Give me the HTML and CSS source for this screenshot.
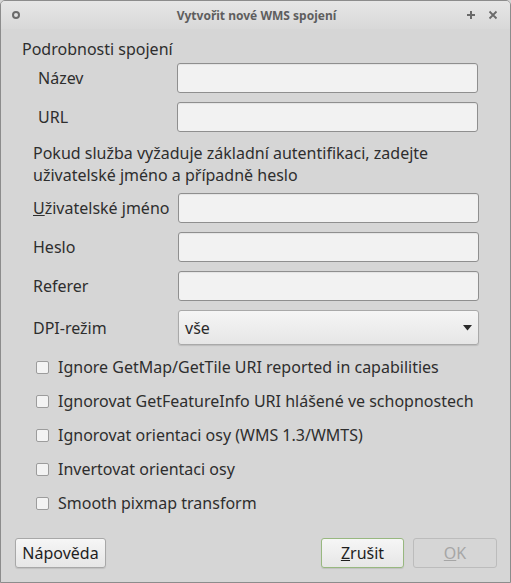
FILE: index.html
```html
<!DOCTYPE html>
<html lang="cs">
<head>
<meta charset="utf-8">
<title>Vytvořit nové WMS spojení</title>
<link rel="stylesheet" href="styles.css">
</head>
<body>
<div class="window">
  <div class="titlebar">
    <svg class="tb-icon tb-menu" width="10" height="10" viewBox="0 0 10 10"><circle cx="5" cy="5" r="3" fill="none" stroke="#6a6a6a" stroke-width="2"/></svg>
    <div class="title">Vytvořit nové WMS spojení</div>
    <div class="tb-right">
      <svg class="tb-icon" width="10" height="10" viewBox="0 0 10 10"><path d="M5 1v8M1 5h8" stroke="#6a6a6a" stroke-width="2"/></svg>
      <svg class="tb-icon" width="10" height="10" viewBox="0 0 10 10"><path d="M1.5 1.5l7 7M8.5 1.5l-7 7" stroke="#6a6a6a" stroke-width="1.8"/></svg>
    </div>
  </div>
  <div class="content">
    <div class="group-title">Podrobnosti spojení</div>
    <div class="form form-top">
      <label class="lbl lbl-indent">Název</label><div class="input"></div>
      <label class="lbl lbl-indent">URL</label><div class="input"></div>
    </div>
    <p class="auth-note">Pokud služba vyžaduje základní autentifikaci, zadejte uživatelské jméno a případně heslo</p>
    <div class="form form-auth">
      <label class="lbl"><u>U</u>živatelské jméno</label><div class="input"></div>
      <label class="lbl">Heslo</label><div class="input"></div>
      <label class="lbl">Referer</label><div class="input"></div>
      <label class="lbl">DPI-režim</label>
      <div class="combo"><span>vše</span><svg width="9" height="6" viewBox="0 0 9 6"><path d="M0 0h9L4.5 5.5z" fill="#2a2a2a"/></svg></div>
    </div>
    <div class="checks">
      <div class="check"><span class="box"></span>Ignore GetMap/GetTile URI reported in capabilities</div>
      <div class="check"><span class="box"></span>Ignorovat GetFeatureInfo URI hlášené ve schopnostech</div>
      <div class="check"><span class="box"></span>Ignorovat orientaci osy (WMS 1.3/WMTS)</div>
      <div class="check"><span class="box"></span>Invertovat orientaci osy</div>
      <div class="check"><span class="box"></span>Smooth pixmap transform</div>
    </div>
    <div class="buttons">
      <div class="btn btn-help">Nápověda</div>
      <div class="spacer"></div>
      <div class="btn btn-focus"><u>Z</u>rušit</div>
      <div class="btn btn-disabled"><u>O</u>K</div>
    </div>
  </div>
</div>
</body>
</html>
```

FILE: styles.css
```css
html, body {
  margin: 0;
  padding: 0;
  background: #d6d6d6;
}
body {
  font-family: "Noto Sans", "Open Sans", sans-serif;
  font-size: 16px;
  color: #2e2e2e;
}
.window {
  width: 511px;
  height: 583px;
  box-sizing: border-box;
  border: 1px solid #8c8c8c;
  border-radius: 5px 5px 0 0;
  background: #d6d6d6;
  display: flex;
  flex-direction: column;
  overflow: hidden;
}
.titlebar {
  height: 28px;
  flex: none;
  display: flex;
  align-items: center;
  background: linear-gradient(#e6e6e6, #d8d8d8);
  padding: 0 12px 0 10px;
}
.title {
  flex: 1;
  text-align: center;
  font-size: 12px;
  font-weight: bold;
  color: #5e5e5e;
  margin-left: 26px;
}
.tb-right {
  display: flex;
  gap: 12px;
  align-items: center;
}
.tb-icon {
  display: block;
}
.content {
  flex: 1;
  display: flex;
  flex-direction: column;
  padding: 10px 13px 0 21px;
}
.group-title {
  line-height: 20px;
  height: 20px;
}
.form {
  display: grid;
  row-gap: 9px;
  align-items: center;
}
.form-top {
  margin-top: 4px;
  grid-template-columns: 155px 301px;
}
.form-auth {
  margin-top: 7px;
  margin-left: 11px;
  grid-template-columns: 135px 301px;
  column-gap: 10px;
}
.lbl {
  line-height: 20px;
  white-space: nowrap;
}
.lbl-indent {
  padding-left: 16px;
}
.input {
  height: 30px;
  box-sizing: border-box;
  border: 1px solid #8f8f8f;
  border-radius: 3px;
  background: #f2f2f2;
  box-shadow: inset 0 1px 1px rgba(0,0,0,0.06);
}
.auth-note {
  margin: 10px 0 0 11px;
  line-height: 22px;
  width: 450px;
}
.combo {
  height: 35px;
  box-sizing: border-box;
  border: 1px solid #a9a9a9;
  border-radius: 3px;
  background: linear-gradient(#f5f5f5, #e6e6e6);
  box-shadow: 0 1px 1px rgba(0,0,0,0.12);
  display: flex;
  align-items: center;
  justify-content: space-between;
  padding: 0 6px 0 6px;
  color: #2a2a2a;
}
.combo svg {
  margin-top: 1px;
}
.checks {
  margin-top: 5px;
  margin-left: 14px;
  display: flex;
  flex-direction: column;
}
.check {
  height: 34px;
  display: flex;
  align-items: center;
  white-space: nowrap;
}
.box {
  width: 13px;
  height: 13px;
  box-sizing: border-box;
  border: 1px solid #9c9c9c;
  border-radius: 2px;
  background: #f3f3f3;
  margin-right: 9px;
  flex: none;
}
.buttons {
  margin-top: 18px;
  margin-left: -7px;
  display: flex;
  gap: 9px;
}
.spacer {
  flex: 1;
}
.btn {
  height: 30px;
  box-sizing: border-box;
  border: 1px solid #a8a8a8;
  border-radius: 3px;
  background: linear-gradient(#f6f6f6, #e6e6e6);
  box-shadow: 0 1px 1px rgba(0,0,0,0.1);
  display: flex;
  align-items: center;
  justify-content: center;
  line-height: 20px;
  color: #1e1e1e;
}
.btn-help {
  width: 91px;
}
.btn-focus {
  width: 83px;
  border-color: #98b880;
}
.btn-disabled {
  width: 84px;
  background: #d6d6d6;
  border-color: #bcbcbc;
  box-shadow: none;
  color: #a6a6a6;
}
```
